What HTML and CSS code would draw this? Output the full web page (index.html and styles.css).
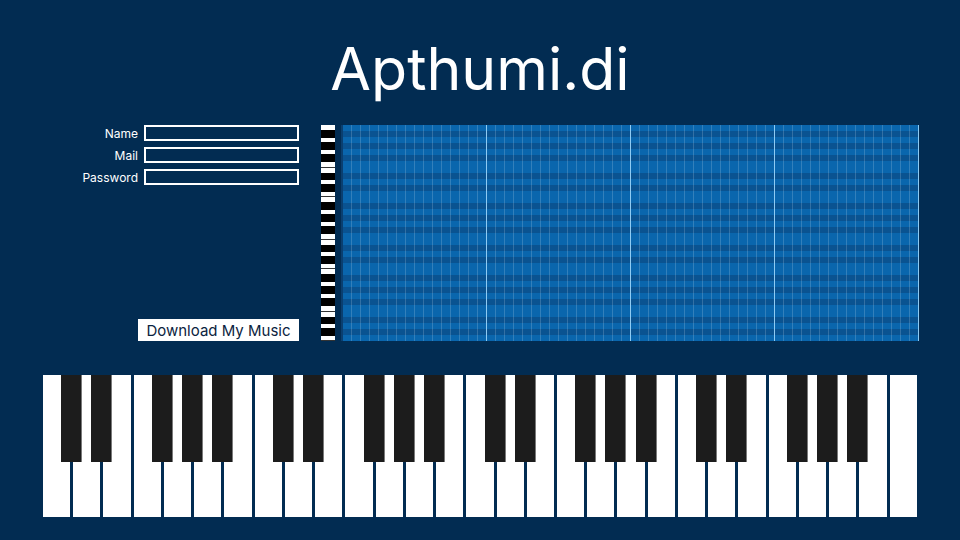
FILE: index.html
```html
<!DOCTYPE html>
<html lang="en">
<head>
    <meta charset="UTF-8">
    <meta name="viewport" content="width=device-width, initial-scale=1.0">
    <title>Apthumi.di</title>
    <link rel="stylesheet" href="styles.css">
</head>
<body>
    <h1 class="title">Apthumi.di</h1>
    <div class="wrap">
        <div class="editor">
            <div class="side">
                <form class="account">
                    <label class="field"><span>Name</span><input type="text"></label>
                    <label class="field"><span>Mail</span><input type="email"></label>
                    <label class="field"><span>Password</span><input type="password"></label>
                </form>
                <button type="button" class="download">Download My Music</button>
            </div>
            <div class="strip"></div>
            <div class="roll"></div>
        </div>

        <div class="keyboard">
            <!-- octave 1 -->
            <div class="key"><span class="black"></span></div>
            <div class="key"><span class="black"></span></div>
            <div class="key"></div>
            <div class="key"><span class="black"></span></div>
            <div class="key"><span class="black"></span></div>
            <div class="key"><span class="black"></span></div>
            <div class="key"></div>
            <!-- octave 2 -->
            <div class="key"><span class="black"></span></div>
            <div class="key"><span class="black"></span></div>
            <div class="key"></div>
            <div class="key"><span class="black"></span></div>
            <div class="key"><span class="black"></span></div>
            <div class="key"><span class="black"></span></div>
            <div class="key"></div>
            <!-- octave 3 -->
            <div class="key"><span class="black"></span></div>
            <div class="key"><span class="black"></span></div>
            <div class="key"></div>
            <div class="key"><span class="black"></span></div>
            <div class="key"><span class="black"></span></div>
            <div class="key"><span class="black"></span></div>
            <div class="key"></div>
            <!-- octave 4 -->
            <div class="key"><span class="black"></span></div>
            <div class="key"><span class="black"></span></div>
            <div class="key"></div>
            <div class="key"><span class="black"></span></div>
            <div class="key"><span class="black"></span></div>
            <div class="key"><span class="black"></span></div>
            <div class="key"></div>
            <!-- top C -->
            <div class="key"></div>
        </div>
    </div>
</body>
</html>
```

FILE: styles.css
```css
body {
    margin: 0;
    background-color: #022c52;
    font-family: Inter, "Noto Sans", sans-serif;
    color: white;
    height: 540px;
    overflow: hidden;
}
.title {
    margin: 0;
    padding-top: 34px;
    height: 125px;
    box-sizing: border-box;
    text-align: center;
    font-size: 59px;
    font-weight: 400;
    line-height: 70px;
}
.wrap {
    width: 874px;
    margin: 0 auto;
}
.editor {
    display: flex;
    height: 216px;
    margin-right: -2px;
}
.side {
    flex: 1;
    display: flex;
    flex-direction: column;
    justify-content: space-between;
    align-items: flex-end;
    margin-right: 22px;
}
.account {
    display: flex;
    flex-direction: column;
    gap: 6px;
}
.field {
    display: flex;
    justify-content: flex-end;
    align-items: center;
    gap: 6px;
    font-size: 12px;
}
.field input {
    width: 155px;
    height: 16px;
    box-sizing: border-box;
    border: 2px solid white;
    background: transparent;
    margin: 0;
    padding: 0 4px;
    color: white;
}
.download {
    width: 161px;
    height: 22px;
    border: none;
    background-color: white;
    color: #0b2340;
    font-family: Inter, "Noto Sans", sans-serif;
    font-size: 15px;
    padding: 0;
    cursor: pointer;
}
.strip {
    width: 14px;
    margin-right: 6px;
    background: linear-gradient(to bottom,
        #fff 0 5px, #000 5px 13px, #fff 13px 17px, #000 17px 25px,
        #fff 25px 29px, #000 29px 37px, #fff 37px 42px, #333 42px 43px,
        #fff 43px 48px, #000 48px 55px, #fff 55px 59px, #000 59px 67px,
        #fff 67px 71px, #333 71px 72px);
    background-size: 100% 72px;
}
.roll {
    width: 576px;
    border-left: 2px solid #0a3f70;
    background:
        linear-gradient(to right, transparent 0 143px, #8ecbf3 143px 144px),
        linear-gradient(to right, transparent 0 8px, rgba(255, 255, 255, 0.17) 8px 9px),
        linear-gradient(to bottom,
            #0a66ad 0 6px, #0a5391 6px 12px, #0a66ad 12px 18px, #0a5391 18px 24px,
            #0a66ad 24px 30px, #0a5391 30px 36px, #0a66ad 36px 48px, #0a5391 48px 54px,
            #0a66ad 54px 60px, #0a5391 60px 66px, #0a66ad 66px 72px);
    background-size: 144px 100%, 9px 100%, 100% 72px;
}
.keyboard {
    display: flex;
    gap: 3px;
    height: 142px;
    margin-top: 34px;
}
.key {
    flex: 1;
    position: relative;
    background-color: white;
}
.black {
    position: absolute;
    top: 0;
    right: -12px;
    width: 21px;
    height: 87px;
    background-color: #1c1c1c;
    box-shadow: inset -1px 0 #7a7a7a;
    z-index: 1;
}
```
